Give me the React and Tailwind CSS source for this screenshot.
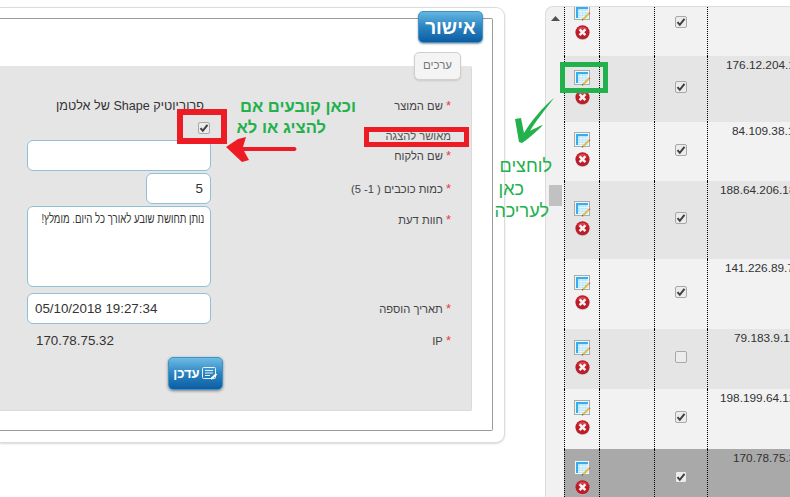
const rows = [
  { h: "h-[64px]", bg: "bg-[#f2f2f2]", ip: "", pl: "pl-[16px]", checked: true },
  { h: "h-[66px]", bg: "bg-[#e5e5e5]", ip: "176.12.204.123", pl: "pl-[18px]", checked: true },
  { h: "h-[59px]", bg: "bg-[#f2f2f2]", ip: "84.109.38.15", pl: "pl-[24px]", checked: true },
  { h: "h-[78px]", bg: "bg-[#e5e5e5]", ip: "188.64.206.18", pl: "pl-[12px]", checked: true },
  { h: "h-[70px]", bg: "bg-[#f2f2f2]", ip: "141.226.89.77", pl: "pl-[17px]", checked: true },
  { h: "h-[60px]", bg: "bg-[#e5e5e5]", ip: "79.183.9.124", pl: "pl-[26px]", checked: false },
  { h: "h-[60px]", bg: "bg-[#f2f2f2]", ip: "198.199.64.12", pl: "pl-[12px]", checked: true },
  { h: "h-[60px]", bg: "bg-[#a9a9a9]", ip: "170.78.75.32", pl: "pl-[25px]", checked: true },
];

function EditIcon() {
  return (
    <svg width="17" height="16" viewBox="0 0 17 16" className="block">
      <rect x="0.5" y="0.5" width="15" height="14" fill="#f4f6f6" stroke="#a4adb2" />
      <rect x="2" y="2" width="12" height="11" fill="#b4e4fa" />
      <rect x="2" y="2" width="12" height="2" fill="#37aeeb" />
      <rect x="2" y="2" width="2" height="11" fill="#37aeeb" />
      <path d="M4 6.5h10M4 9h10M4 11.5h10M7 4v9M10 4v9M13 4v9" stroke="#f4fbfe" strokeWidth="0.7" />
      <path d="M9 14.5L14.8 8.6" stroke="#e3bb35" strokeWidth="1.8" />
      <path d="M14.4 8L15.3 7.2L16.5 8.4L15.6 9.3Z" fill="#e2574c" />
      <path d="M7.8 15.6L8.4 14L9.6 15Z" fill="#333" />
    </svg>
  );
}

function DeleteIcon() {
  return (
    <svg width="15" height="15" viewBox="0 0 15 15" className="block">
      <circle cx="7.5" cy="8" r="7" fill="#bdbdbd" />
      <circle cx="7.5" cy="7.2" r="7" fill="#bd1c28" />
      <path d="M2.5 4.5A6 6 0 0 1 12.5 4.5Z" fill="#d8434c" />
      <path d="M4.6 4.3L10.4 10.1M10.4 4.3L4.6 10.1" stroke="#f8f2f2" strokeWidth="2.6" />
    </svg>
  );
}

function Check({ checked }) {
  return (
    <div className="w-[12px] h-[12px] rounded-[2px] border border-[#a8a8a8] bg-[#ececec] flex items-center justify-center">
      {checked && (
        <svg width="10" height="10" viewBox="0 0 10 10" className="block">
          <path d="M1.5 5.2L3.8 7.8L8.5 1.8" fill="none" stroke="#3f3f3f" strokeWidth="2" />
        </svg>
      )}
    </div>
  );
}

function Label({ children, className = "" }) {
  return (
    <div className={"w-[240px] shrink-0 text-[11.2px] text-[#444] leading-[15px] " + className}>
      <span className="text-[13px] text-[#ef3b3b]">*</span> {children}
    </div>
  );
}

const inputCls =
  "block h-full border border-[#8fc0d8] rounded-[6px] bg-white text-[13.33px] text-[#333] outline-none";

export default function App() {
  return (
    <div className="relative w-[790px] h-[497px] overflow-hidden bg-white flex font-['Liberation_Sans',Arial,sans-serif]">
      {/* left card */}
      <div className="w-[505px] h-[436px] mt-[7px] shrink-0 bg-white border border-l-0 border-[#dcdcdc] rounded-r-[9px] shadow-[0_1px_2px_rgba(0,0,0,0.15)] pt-[10px] pr-[11px] pb-[11px]">
        <div className="h-full border border-l-0 border-[#9a9a9a] rounded-r-[2px] flex flex-col">
          <div className="self-end -mt-[8px] mr-[9px] w-[65px] h-[32px] rounded-[5px] border border-[#3f93c8] bg-gradient-to-b from-[#63b6e2] via-[#2a84c0] to-[#0b5da3] shadow-[0_1px_2px_rgba(0,0,0,0.4)] flex items-center justify-center text-white font-bold text-[19px] leading-none" dir="rtl">
            אישור
          </div>
          <div className="relative z-10 self-end mt-[9px] mr-[31px] w-[47px] h-[28px] rounded-[5px] border border-[#cfcfcf] bg-[#f4f4f4] shadow-[0_1px_2px_rgba(0,0,0,0.12)] flex items-center justify-center text-[11.5px] text-[#777]" dir="rtl">
            ערכים
          </div>
          <div className="-mt-[14px] mr-[20px] h-[345px] bg-[#e5e5e5] border-r border-b border-[#dadada] rounded-r-[2px] pr-[20px] flex flex-col" dir="rtl">
            <div className="mt-[30px] h-[20px] flex items-center">
              <Label>שם המוצר</Label>
              <div className="text-[12.6px] text-[#333] mr-[7px] whitespace-nowrap">פרוביוטיק Shape של אלטמן</div>
            </div>
            <div className="h-[24px] flex">
              <div className="w-[240px] shrink-0 text-[11.2px] text-[#555] leading-[15px] pt-[13px]">מאושר להצגה</div>
              <div className="mr-[1px] pt-[6px]"><Check checked /></div>
            </div>
            <div className="h-[31px] flex items-center">
              <Label>שם הלקוח</Label>
              <input readOnly value="" className={inputCls + " w-[184px]"} />
            </div>
            <div className="mt-[2px] h-[31px] flex items-center">
              <Label>כמות כוכבים ( 1- 5)</Label>
              <input readOnly value="5" className={inputCls + " w-[65px] px-[7px]"} />
            </div>
            <div className="mt-[2px] h-[81px] flex">
              <Label className="pt-[6px]">חוות דעת</Label>
              <div className={inputCls + " w-[184px] px-[6px] py-[4px] overflow-hidden text-[12px] leading-[15px]"}>
                <span className="inline-block whitespace-nowrap origin-right scale-x-[0.72]">נותן תחושת שובע לאורך כל היום. מומלץ!</span>
              </div>
            </div>
            <div className="mt-[6px] h-[31px] flex items-center">
              <Label>תאריך הוספה</Label>
              <input readOnly value="05/10/2018 19:27:34" dir="ltr" className={inputCls + " w-[184px] px-[7px]"} />
            </div>
            <div className="mt-[6px] h-[21px] flex items-center">
              <Label>IP</Label>
              <div className="w-[184px] text-left pl-[9px] text-[13.33px] text-[#333]" dir="ltr">170.78.75.32</div>
            </div>
            <div className="mt-[6px] mr-[228px] w-[55px] h-[33px] rounded-[5px] border border-[#3f93c8] bg-gradient-to-b from-[#6cbce4] via-[#2a84c0] to-[#0b5da3] shadow-[0_1px_3px_rgba(0,0,0,0.45)] flex items-center justify-center gap-[1px] text-white font-bold text-[13px]">
              <svg width="17" height="15" viewBox="0 0 17 15" className="block shrink-0">
                <rect x="1.5" y="1.5" width="13" height="11" rx="1" fill="none" stroke="#e6f3fb" />
                <path d="M4 4.5h8M4 7h8M4 9.5h5" stroke="#e6f3fb" />
                <path d="M10 13L15.5 8" stroke="#fff" strokeWidth="2" />
              </svg>
              <span>עדכן</span>
            </div>
          </div>
        </div>
      </div>

      {/* right panel */}
      <div className="ml-[40px] mt-[6px] w-[245px] h-[500px] shrink-0 bg-[#f1f1f1] border-l border-t border-[#dcdcdc] rounded-tl-[8px] flex overflow-hidden">
        <div className="w-[18px] shrink-0 flex flex-col items-center">
          <svg width="9" height="5" viewBox="0 0 9 5" className="block mt-[9px]">
            <path d="M0 5L4.5 0L9 5Z" fill="#505050" />
          </svg>
          <div className="mt-[164px] w-[13px] h-[21px] bg-[#c1c1c1]" />
        </div>
        <div className="flex-1 -mt-[15px] flex flex-col min-w-0">
          {rows.map((r, i) => (
            <div key={i} className={"flex shrink-0 " + r.h + " " + r.bg}>
              <div className="w-[35px] shrink-0 border-l border-dotted border-black flex flex-col items-center justify-center gap-[4px] pb-[4px]">
                <EditIcon />
                <DeleteIcon />
              </div>
              <div className="w-[55px] shrink-0 border-l border-dotted border-black" />
              <div className="w-[53px] shrink-0 border-l border-dotted border-black flex items-center justify-center pb-[4px]">
                <Check checked={r.checked} />
              </div>
              <div className={"flex-1 min-w-0 border-l border-dotted border-black overflow-hidden whitespace-nowrap text-[11.8px] leading-[16px] text-[#333] pt-[1px] " + r.pl}>
                {r.ip}
              </div>
            </div>
          ))}
        </div>
      </div>

      {/* annotations */}
      <div className="absolute left-[177px] top-[109px] w-[50px] h-[35px] border-[6px] border-[#ed1c24]" />
      <div className="absolute left-[364px] top-[127px] w-[105px] h-[20px] border-[5px] border-[#ed1c24]" />
      <div className="absolute left-[560px] top-[62px] w-[48px] h-[31px] border-[5px] border-[#22b14c]" />

      <svg width="76" height="30" viewBox="0 0 76 30" className="absolute left-[224px] top-[134px]">
        <path d="M2 13L14 5L22 3L19 13L71 13Q74 15 71 17L20 17L25 26L18 28Z" fill="#ed1c24" />
      </svg>
      <svg width="44" height="52" viewBox="0 0 44 52" className="absolute left-[513px] top-[96px]">
        <path d="M41 2C32 14 22 26 17 35C21 33 26 30 30 29C25 34 19 40 9 47L6 46L2 23L8 22L11 37C18 25 30 11 41 2Z" fill="#22b14c" />
      </svg>

      <div dir="rtl" className="absolute left-[226px] top-[96px] w-[130px] text-[16.6px] leading-[21px] font-bold text-[#22b14c]">
        וכאן קובעים אם
      </div>
      <div dir="rtl" className="absolute left-[216px] top-[117px] w-[110px] text-[16.6px] leading-[21px] font-bold text-[#22b14c]">
        להציג או לא
      </div>
      <div dir="rtl" className="absolute left-[482px] top-[156px] w-[70px] text-[18px] leading-[21px] text-[#22b14c]">לוחצים</div>
      <div dir="rtl" className="absolute left-[484px] top-[179px] w-[40px] text-[18px] leading-[21px] text-[#22b14c]">כאן</div>
      <div dir="rtl" className="absolute left-[479px] top-[201px] w-[70px] text-[18px] leading-[21px] text-[#22b14c]">לעריכה</div>
    </div>
  );
}
